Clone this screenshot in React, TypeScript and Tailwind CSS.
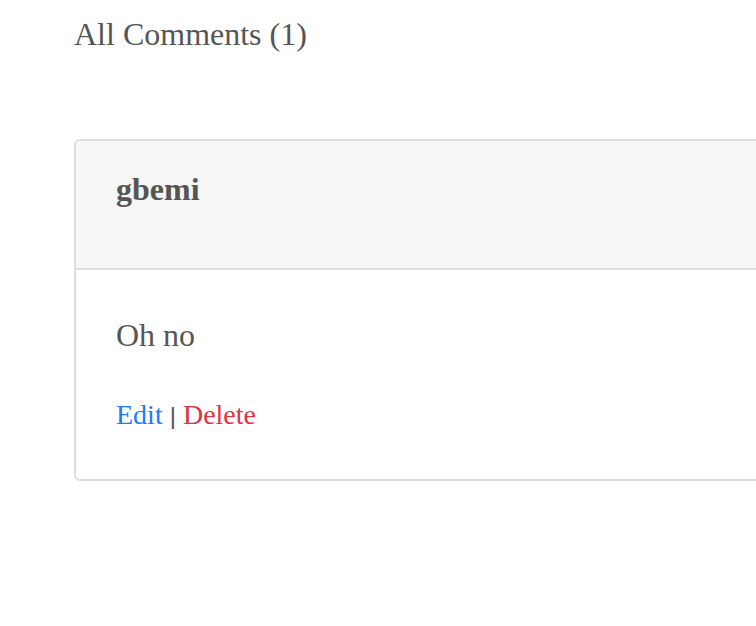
import React from 'react';

const App = () => {
  return (
    <div className="w-[756px] h-[626px] overflow-hidden bg-white font-['Liberation_Serif',serif] text-[#555]">
      <div className="pl-[74px] pt-[14px]">
        <h2 className="text-[32px] leading-[40px]">All Comments (1)</h2>

        <div className="mt-[85px] w-[900px] rounded-[6px] border-2 border-[#ddd]">
          <div className="h-[129px] rounded-t-[5px] border-b-2 border-[#ddd] bg-[#f6f6f6] px-[40px] pt-[28px]">
            <h3 className="text-[32px] font-bold leading-[40px]">gbemi</h3>
          </div>
          <div className="h-[209px] px-[40px] pt-[45px]">
            <p className="text-[32px] leading-[40px]">Oh no</p>
            <div className="mt-[42px] text-[28px] leading-[36px]">
              <a href="#" className="text-[#1a7bff]">Edit</a>
              <span className="mx-[7px] font-['Liberation_Sans',sans-serif] text-[24px]">|</span>
              <a href="#" className="text-[#dc3545]">Delete</a>
            </div>
          </div>
        </div>
      </div>
    </div>
  );
};

export default App;
